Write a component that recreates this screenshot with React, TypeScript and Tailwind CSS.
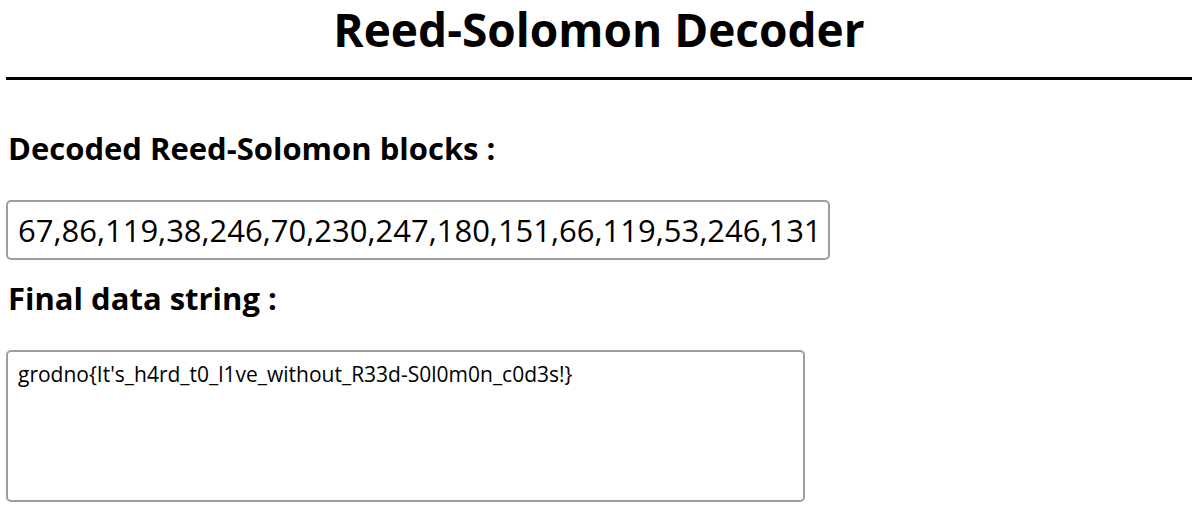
import React from 'react';

const BLOCKS = '67,86,119,38,246,70,230,247,180,151,66,119,53,246,131';
const FLAG = "grodno{It's_h4rd_t0_l1ve_without_R33d-S0l0m0n_c0d3s!}";

export default function App() {
    return (
        <div className="min-h-[512px] bg-white px-[6px] text-black" style={{ fontFamily: '"Open Sans", "Noto Sans", sans-serif' }}>
            <h1 className="pt-[1px] mb-[20px] text-center text-[46px] leading-[56px] font-bold">
                Reed-Solomon Decoder
            </h1>
            <div className="h-[3px] w-full bg-black" />

            <h2 className="mt-[48px] ml-[2px] text-[31px] leading-[40px] font-bold">
                Decoded Reed-Solomon blocks :
            </h2>
            <input
                readOnly
                value={BLOCKS}
                className="mt-[32px] block h-[60px] w-[824px] rounded-[5px] border-2 border-[#9e9e9e] px-[10px] text-[31px] outline-none"
            />

            <h2 className="mt-[18px] ml-[2px] text-[31px] leading-[40px] font-bold">
                Final data string :
            </h2>
            <textarea
                readOnly
                value={FLAG}
                className="mt-[32px] block h-[152px] w-[799px] resize-none rounded-[5px] border-2 border-[#9e9e9e] px-[10px] pt-[8px] text-[21px] leading-[28px] outline-none"
            />
        </div>
    );
}
